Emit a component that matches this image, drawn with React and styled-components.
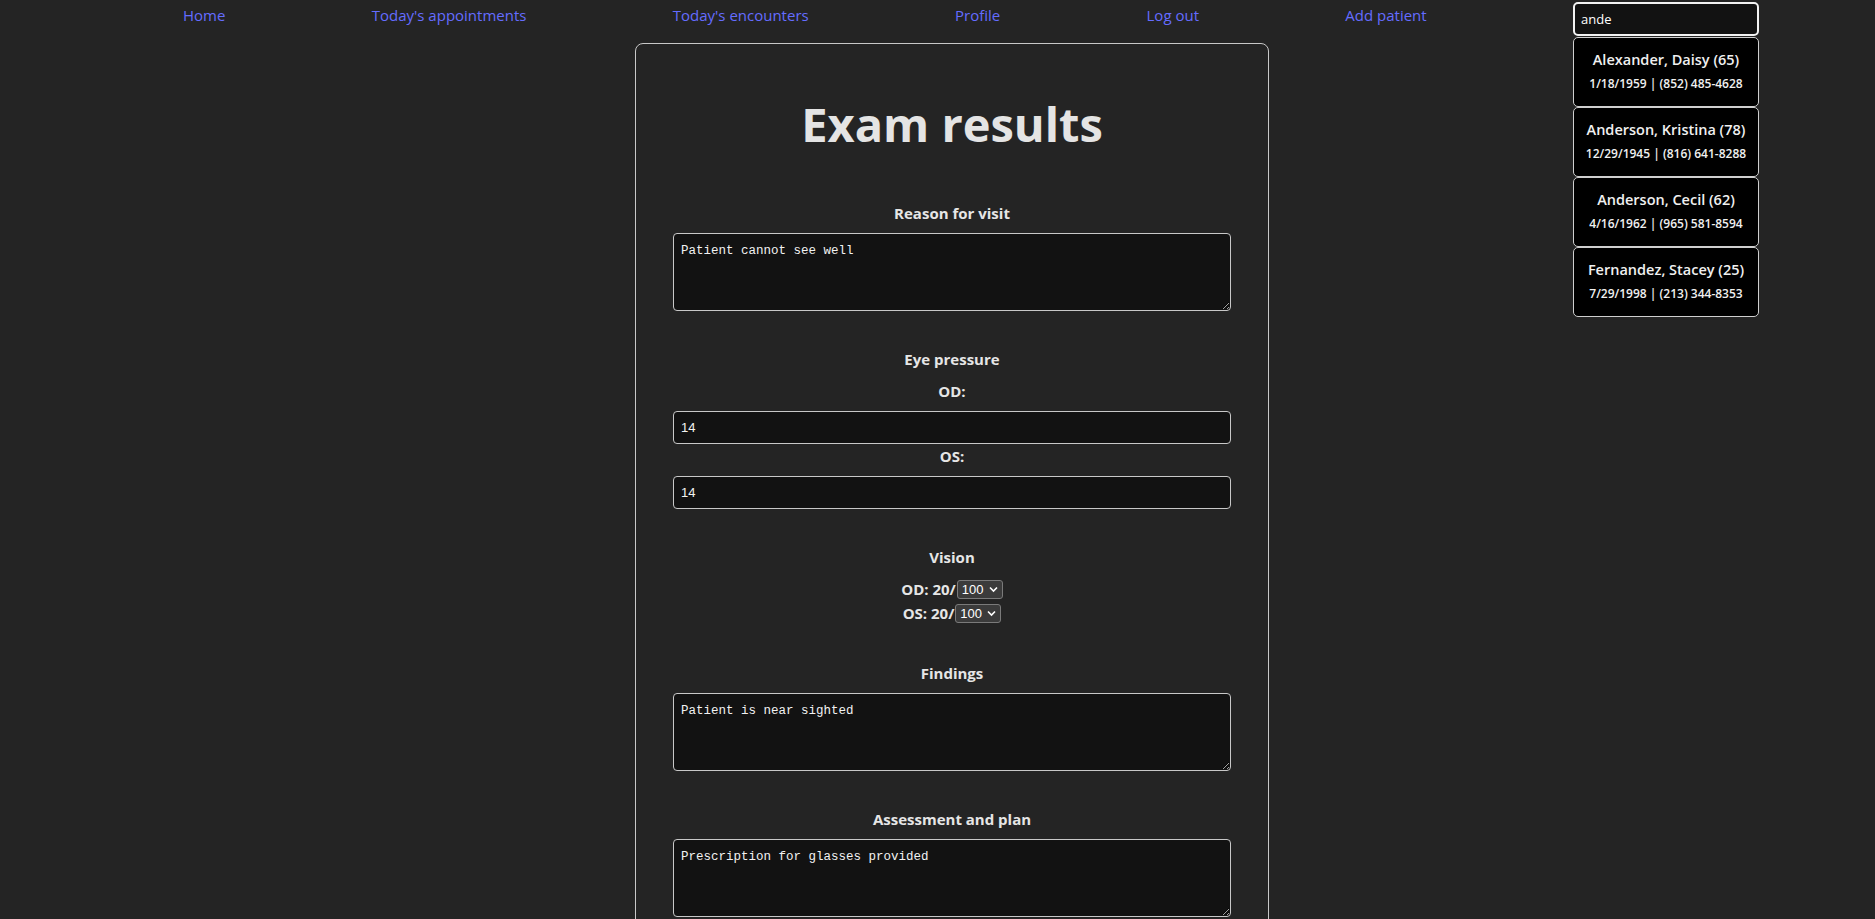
import React from 'react';
import styled, { createGlobalStyle } from 'styled-components';

const GlobalStyle = createGlobalStyle`
  body {
    margin: 0;
    background-color: #242424;
    color: rgba(255, 255, 255, 0.87);
    font-family: "Open Sans", "Noto Sans", sans-serif;
    line-height: 1.5;
  }
`;

const Nav = styled.nav`
  display: flex;
  align-items: flex-start;
  justify-content: space-between;
  padding: 2px 116px 0 183px;
  height: 41px;
`;

const NavLink = styled.a`
  font-size: 15px;
  font-weight: 500;
  color: #646cff;
  text-decoration: none;
  line-height: 24px;
  padding-top: 1px;
  cursor: pointer;
`;

const SearchBox = styled.div`
  position: relative;
  width: 186px;
`;

const SearchInput = styled.input`
  box-sizing: border-box;
  width: 186px;
  height: 34px;
  padding: 0 6px;
  background: #121212;
  color: #fff;
  border: 2px solid #f2f2f2;
  border-radius: 5px;
  font-family: "Open Sans", sans-serif;
  font-size: 13px;
  outline: none;
`;

const Results = styled.ul`
  position: absolute;
  top: 35px;
  left: 0;
  width: 186px;
  margin: 0;
  padding: 0;
  list-style: none;
`;

const ResultItem = styled.li`
  box-sizing: border-box;
  height: 70px;
  padding-top: 10px;
  background: #000;
  border: 1px solid #cfcfcf;
  border-radius: 5px;
  text-align: center;
  color: #f0f0f0;
`;

const ResultName = styled.div`
  font-size: 14.5px;
  font-weight: 600;
  line-height: 24px;
`;

const ResultMeta = styled.div`
  font-size: 12px;
  font-weight: 600;
  line-height: 20px;
  margin-top: 2px;
  white-space: nowrap;
`;

const Main = styled.main`
  display: flex;
  justify-content: center;
  padding-left: 29px;
`;

const Card = styled.section`
  box-sizing: border-box;
  width: 634px;
  border: 1px solid #c8c8c8;
  border-radius: 8px;
  padding: 52px 37px 40px;
  display: flex;
  flex-direction: column;
  gap: 36px;
`;

const Title = styled.h1`
  margin: 0 0 13px;
  font-size: 47px;
  font-weight: 700;
  line-height: 56px;
  text-align: center;
  color: #e4e4e4;
`;

const Section = styled.div`
  display: flex;
  flex-direction: column;
  align-items: stretch;
`;

const Label = styled.label`
  display: block;
  text-align: center;
  font-size: 15px;
  font-weight: 700;
  line-height: 24px;
  color: #e6e6e6;
  margin-bottom: 8px;
`;

const SubLabel = styled(Label)`
  margin-bottom: 8px;
`;

const TextArea = styled.textarea`
  box-sizing: border-box;
  width: 100%;
  height: 78px;
  padding: 9px 7px 8px;
  background: #121212;
  color: #f2f2f2;
  border: 1px solid #c8c8c8;
  border-radius: 4px;
  font-family: "Liberation Mono", "DejaVu Sans Mono", monospace;
  font-size: 12.5px;
  line-height: 16px;
  resize: vertical;
  outline: none;
`;

const NumberInput = styled.input`
  box-sizing: border-box;
  width: 100%;
  height: 33px;
  padding: 0 7px;
  background: #121212;
  color: #f2f2f2;
  border: 1px solid #c8c8c8;
  border-radius: 4px;
  font-family: "Liberation Sans", sans-serif;
  font-size: 13px;
  outline: none;
`;

const VisionRow = styled.div`
  box-sizing: border-box;
  display: flex;
  justify-content: center;
  align-items: center;
  height: 24px;
  font-size: 15px;
  font-weight: 700;
  color: #e6e6e6;
  padding-top: 1px;
`;

const SelectWrap = styled.span`
  position: relative;
  display: inline-flex;
  margin-left: 1px;
`;

const Select = styled.select`
  appearance: none;
  width: 46px;
  height: 19px;
  padding: 0 0 0 4px;
  background: #3b3b3b;
  color: #fff;
  border: 1px solid #7a7a7a;
  border-radius: 3px;
  font-family: "Liberation Sans", sans-serif;
  font-size: 13px;
  outline: none;
`;

const Chevron = styled.svg`
  position: absolute;
  right: 5px;
  top: 6px;
  width: 9px;
  height: 7px;
  pointer-events: none;
`;

const patients = [
  { name: 'Alexander, Daisy (65)', meta: '1/18/1959 | (852) 485-4628' },
  { name: 'Anderson, Kristina (78)', meta: '12/29/1945 | (816) 641-8288' },
  { name: 'Anderson, Cecil (62)', meta: '4/16/1962 | (965) 581-8594' },
  { name: 'Fernandez, Stacey (25)', meta: '7/29/1998 | (213) 344-8353' },
];

function VisionSelect() {
  return (
    <SelectWrap>
      <Select defaultValue="100">
        <option value="20">20</option>
        <option value="40">40</option>
        <option value="100">100</option>
        <option value="200">200</option>
      </Select>
      <Chevron viewBox="0 0 9 7">
        <path d="M1 1.5 L4.5 5 L8 1.5" stroke="#fff" strokeWidth="1.6" fill="none" />
      </Chevron>
    </SelectWrap>
  );
}

export default function App() {
  return (
    <>
      <GlobalStyle />
      <Nav>
        <NavLink>Home</NavLink>
        <NavLink>Today's appointments</NavLink>
        <NavLink>Today's encounters</NavLink>
        <NavLink>Profile</NavLink>
        <NavLink>Log out</NavLink>
        <NavLink>Add patient</NavLink>
        <SearchBox>
          <SearchInput defaultValue="ande" />
          <Results>
            {patients.map((p) => (
              <ResultItem key={p.name}>
                <ResultName>{p.name}</ResultName>
                <ResultMeta>{p.meta}</ResultMeta>
              </ResultItem>
            ))}
          </Results>
        </SearchBox>
      </Nav>
      <Main>
        <Card>
          <Title>Exam results</Title>
          <Section>
            <Label>Reason for visit</Label>
            <TextArea defaultValue="Patient cannot see well" />
          </Section>
          <Section>
            <Label>Eye pressure</Label>
            <SubLabel>OD:</SubLabel>
            <NumberInput defaultValue="14" />
            <SubLabel>OS:</SubLabel>
            <NumberInput defaultValue="14" />
          </Section>
          <Section>
            <Label>Vision</Label>
            <VisionRow>
              OD: 20/<VisionSelect />
            </VisionRow>
            <VisionRow>
              OS: 20/<VisionSelect />
            </VisionRow>
          </Section>
          <Section>
            <Label>Findings</Label>
            <TextArea defaultValue="Patient is near sighted" />
          </Section>
          <Section>
            <Label>Assessment and plan</Label>
            <TextArea defaultValue="Prescription for glasses provided" />
          </Section>
        </Card>
      </Main>
    </>
  );
}
